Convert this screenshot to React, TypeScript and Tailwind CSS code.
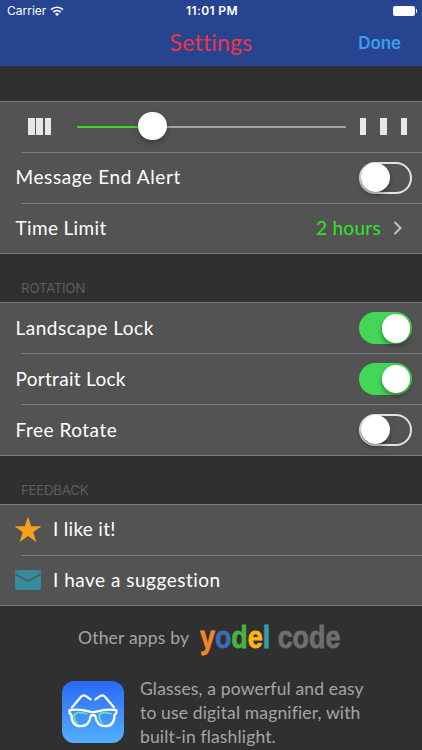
import React from "react";
import clsx from "clsx";

function StatusBar() {
  return (
    <div className="grid h-[22px] grid-cols-3 items-center pl-[7px] pr-[5px] font-['Inter'] text-[12px] leading-[22px] text-white">
      <div className="flex items-center gap-[4px]">
        <span>Carrier</span>
        <svg width="14" height="11" viewBox="0 0 14 11" fill="none" stroke="#fff" strokeWidth="1.7">
          <path d="M1 3.7C4.4.4 9.6.4 13 3.7" />
          <path d="M3.2 6.1C5.4 4 8.6 4 10.8 6.1" />
          <path d="M7 10 4.9 7.9C6.1 6.8 7.9 6.8 9.1 7.9Z" fill="#fff" stroke="none" />
        </svg>
      </div>
      <span className="whitespace-nowrap text-center font-semibold tracking-[0.4px]">11:01 PM</span>
      <div className="flex items-center justify-end gap-px">
        <div className="h-[10px] w-[22px] rounded-[2px] bg-white" />
        <div className="h-[4px] w-[1.5px] rounded-r bg-white" />
      </div>
    </div>
  );
}

function Toggle({ on = false }: { on?: boolean }) {
  return (
    <div
      className={clsx(
        "flex h-8 w-[53px] shrink-0 items-center rounded-full",
        on ? "justify-end bg-[#44d657] pr-[2px]" : "border-2 border-[#e4e4e4]"
      )}
    >
      <div className={clsx("shrink-0 rounded-full bg-white shadow-[0_3px_5px_rgba(0,0,0,0.35)]", on ? "size-[28.5px]" : "-ml-[0.5px] size-[29px]")} />
    </div>
  );
}

interface RowProps {
  children: React.ReactNode;
  first?: boolean;
  className?: string;
}

function Row({ children, first, className }: RowProps) {
  return (
    <div>
      {!first && <div className="ml-[21px] h-px bg-[#7b7b7d]" />}
      <div className={clsx("flex h-[49.8px] items-center pr-[10px]", className ?? "pl-[15.5px]")}>{children}</div>
    </div>
  );
}

function Group({ children, className }: { children: React.ReactNode; className?: string }) {
  return <div className={clsx("flex flex-col border-y border-[#78787a] bg-[#535353] text-[19px] text-white", className)}>{children}</div>;
}

function SectionTitle({ children }: { children: string }) {
  return <div className="flex h-[48px] items-end pb-[4px] pl-[21px] font-['Inter'] text-[13.5px] leading-5 tracking-[-0.4px] text-[#5d5d60]">{children}</div>;
}

function Bars({ className }: { className: string }) {
  return (
    <div className={clsx("flex shrink-0", className)}>
      {[0, 1, 2].map(i => (
        <div key={i} className="h-[17px] w-[6.5px] bg-[#e6e8e8]" />
      ))}
    </div>
  );
}

function GlassesIcon() {
  return (
    <svg width="62" height="62" viewBox="0 0 62 62" className="shrink-0" fill="none">
      <defs>
        <linearGradient id="sky" x1="0" y1="0" x2="0" y2="1">
          <stop offset="0" stopColor="#2869f8" />
          <stop offset="1" stopColor="#54b0fc" />
        </linearGradient>
      </defs>
      <rect width="62" height="62" rx="12" fill="url(#sky)" />
      <g stroke="#fff" strokeWidth="2.3" strokeLinecap="round" strokeLinejoin="round">
        <path d="M10 26.5 19 15.8Q21.2 13.3 24 15.1L28.5 18.4" />
        <path d="M52 26.5 43 15.8Q40.8 13.3 38 15.1L33.5 18.4" />
        <path d="M7.5 29.2Q18 27.8 26.5 30.4 31 31.7 35.5 30.4 44 27.8 54.5 29.2L54.3 32.3 52.6 33.6C52.4 42 48.8 45.2 43.4 45.2 37.4 45.2 34.2 41.4 33.3 34.8Q31 33.2 28.7 34.8C27.8 41.4 24.6 45.2 18.6 45.2 13.2 45.2 9.6 42 9.4 33.6L7.7 32.3Z" />
      </g>
      <g stroke="#65e8b2" strokeWidth="1.7" strokeLinecap="round">
        <path d="M24.5 32.8Q12 29.5 12.2 35.5 12.5 39.5 15 41.8" />
        <path d="M49.5 32.8Q37 29.5 37.2 35.5 37.5 39.5 40 41.8" />
      </g>
    </svg>
  );
}

export default function App() {
  return (
    <div className="h-[750px] w-full overflow-hidden bg-[#303030] font-['Lato',sans-serif]">
      <header className="h-[66px] bg-[#274490]">
        <StatusBar />
        <div className="grid h-[42px] grid-cols-3 items-center">
          <span />
          <h1 className="pb-[4px] text-center text-[23px] leading-[38px] tracking-[0.2px] text-[#ec3645]">Settings</h1>
          <button className="pr-[21px] text-right font-['Inter'] text-[17px] font-semibold leading-[43px] tracking-[-0.1px] text-[#3d9bf4]">Done</button>
        </div>
      </header>

      <Group className="mt-[35px]">
        <Row first className="pl-[28px] pr-[15px]">
          <Bars className="gap-[1.8px]" />
          <div className="relative ml-[26px] mr-[14px] flex h-7 flex-1 items-center">
            <div className="h-[2.5px] w-[70px] rounded-l bg-[#43d52e]" />
            <div className="h-[2px] flex-1 rounded-r bg-[#a4a4a4]" />
            <div className="absolute left-[61px] top-[-1px] size-[28.5px] rounded-full bg-white shadow-[0_3px_6px_rgba(0,0,0,0.3)]" />
          </div>
          <Bars className="gap-[14px]" />
        </Row>
        <Row>
          <span className="flex-1 tracking-[0.6px]">Message End Alert</span>
          <Toggle />
        </Row>
        <Row>
          <span className="flex-1 tracking-[0.35px]">Time Limit</span>
          <span className="tracking-[0.3px] text-[#2ee81f]">2 hours</span>
          <svg width="10" height="14" viewBox="0 0 10 14" fill="none" stroke="#c3c3c8" strokeWidth="2" className="ml-[12px] mr-[9px]">
            <path d="m1.5 1 6 6-6 6" />
          </svg>
        </Row>
      </Group>

      <SectionTitle>ROTATION</SectionTitle>
      <Group>
        <Row first>
          <span className="flex-1 tracking-[0.5px]">Landscape Lock</span>
          <Toggle on />
        </Row>
        <Row>
          <span className="flex-1 tracking-[0.3px]">Portrait Lock</span>
          <Toggle on />
        </Row>
        <Row>
          <span className="flex-1 tracking-[0.5px]">Free Rotate</span>
          <Toggle />
        </Row>
      </Group>

      <SectionTitle>FEEDBACK</SectionTitle>
      <Group>
        <Row first className="gap-[11px] pl-[14px]">
          <svg width="28" height="27" viewBox="0 0 28 27" fill="#f7a01b">
            <path d="M14 .5 17.2 10.2H27.5L19.2 16.2 22.4 26 14 20 5.6 26 8.8 16.2.5 10.2H10.8Z" />
          </svg>
          <span className="tracking-[0.3px]">I like it!</span>
        </Row>
        <Row className="gap-[11px] pl-[14px]">
          <svg width="28" height="20" viewBox="0 0 28 20">
            <rect x="1" width="26" height="20" rx="1" fill="#338b9b" />
            <path d="M1 4.2 14 10.8 27 4.2" fill="none" stroke="#505557" strokeWidth="1.5" />
          </svg>
          <span className="tracking-[0.5px]">I have a suggestion</span>
        </Row>
      </Group>

      <footer className="text-[#a5a5a5]">
        <div className="flex h-[64px] items-center pl-[78px]">
          <span className="w-[122px] whitespace-nowrap text-[17.5px] tracking-[0.2px]">Other apps by</span>
          <div className="mb-[3px] origin-left scale-x-[0.84] whitespace-nowrap font-['Liberation_Sans'] text-[32px] font-bold leading-none text-[#6d6e71] [-webkit-text-stroke:0.8px_currentColor]">
            <span className="text-[#f58426]">y</span>
            <span className="text-[#3c6db5]">o</span>
            <span className="text-[#4cb13e]">d</span>
            <span className="text-[#fdb515]">e</span>
            <span className="text-[#3b9dab]">l</span>
            <span> code</span>
          </div>
        </div>
        <div className="flex pl-[62px] pt-[11px]">
          <GlassesIcon />
          <p className="-mt-[4px] ml-[16px] whitespace-nowrap text-[17.5px] leading-[23.6px] tracking-[0.15px]">
            Glasses, a powerful and easy
            <br />
            to use digital magnifier, with
            <br />
            built-in flashlight.
          </p>
        </div>
      </footer>
    </div>
  );
}
